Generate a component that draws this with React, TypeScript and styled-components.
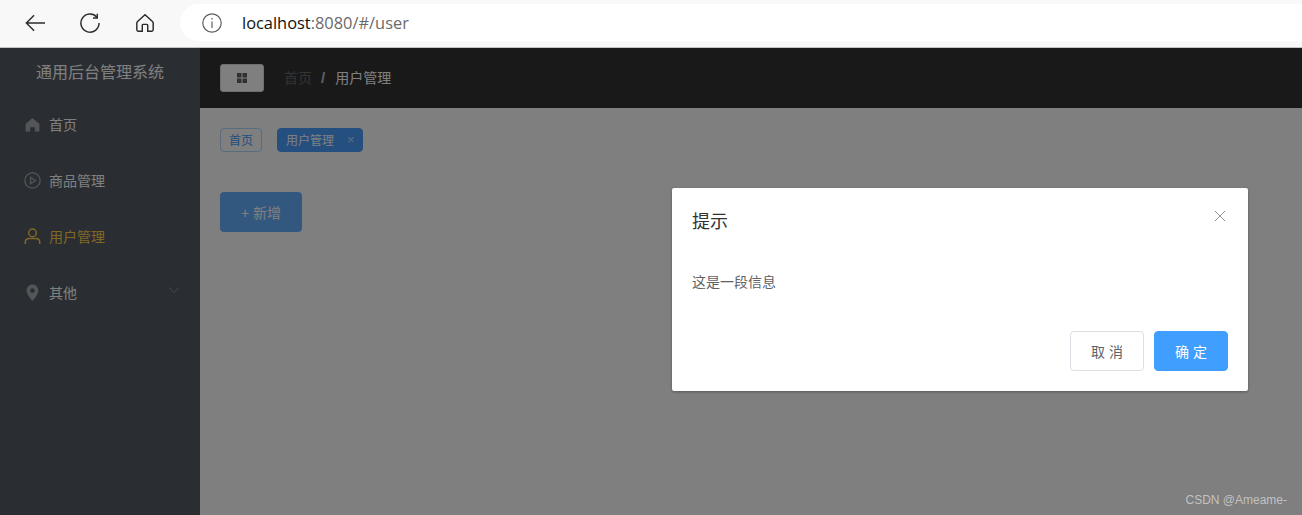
import React from 'react'
import styled, { createGlobalStyle } from 'styled-components'

const GlobalStyle = createGlobalStyle`
  html, body {
    margin: 0;
    padding: 0;
    height: 100%;
    overflow: hidden;
    font-family: "Liberation Sans", "Noto Sans CJK SC", sans-serif;
  }
  * {
    box-sizing: border-box;
  }
`

const Screen = styled.div`
  position: relative;
  width: 1302px;
  height: 515px;
  display: flex;
  flex-direction: column;
  overflow: hidden;
`

const BrowserBar = styled.div`
  flex: none;
  height: 48px;
  display: flex;
  align-items: center;
  padding: 1px 0 3px 25px;
  background: #f8f8f8;
  border-bottom: 1px solid #c4c4c4;
`

const NavGroup = styled.div`
  flex: none;
  display: flex;
  gap: 35px;
`

const NavIcon = styled.svg`
  display: block;
  width: 20px;
  height: 20px;
  fill: none;
  stroke: #2b2b2b;
  stroke-width: 1.6;
`

const AddressPill = styled.div`
  flex: 1;
  height: 37px;
  margin-left: 25px;
  margin-right: -40px;
  display: flex;
  align-items: center;
  gap: 20px;
  padding-left: 22px;
  background: #fff;
  border-radius: 19px;
  font-family: "Open Sans", sans-serif;
  font-size: 16.4px;
`

const UrlHost = styled.span`
  color: #111;
`

const UrlRest = styled.span`
  color: #6a6a6a;
`

const AppArea = styled.div`
  position: relative;
  flex: 1;
  display: flex;
  min-height: 0;
`

const Sidebar = styled.aside`
  flex: none;
  width: 200px;
  background: #545c64;
  color: #fff;
`

const SideTitle = styled.h3`
  margin: 0;
  height: 49px;
  line-height: 49px;
  text-align: center;
  font-size: 16px;
  font-weight: 400;
  color: #fff;
`

const MenuItem = styled.div<{ $active?: boolean }>`
  position: relative;
  height: 56px;
  display: flex;
  align-items: center;
  gap: 8px;
  padding: 0 0 2px 24px;
  font-size: 14px;
  color: ${({ $active }) => ($active ? '#ffd04b' : '#fff')};
`

const MenuIcon = styled.svg<{ $muted?: boolean }>`
  flex: none;
  width: 17px;
  height: 17px;
  color: ${({ $muted }) => ($muted ? '#a6abb0' : '#ffd04b')};
`

const Chevron = styled.svg`
  position: absolute;
  right: 20px;
  top: 21px;
  width: 12px;
  height: 8px;
  fill: none;
  stroke: #8f959b;
  stroke-width: 1;
`

const Content = styled.div`
  flex: 1;
  min-width: 0;
  display: flex;
  flex-direction: column;
  background: #fff;
`

const Header = styled.header`
  flex: none;
  height: 60px;
  display: flex;
  align-items: center;
  gap: 20px;
  padding-left: 20px;
  background: #333;
`

const MenuButton = styled.div`
  width: 44px;
  height: 28px;
  display: flex;
  align-items: center;
  justify-content: center;
  background: #fff;
  border: 1px solid #dcdfe6;
  border-radius: 3px;
`

const Breadcrumb = styled.div`
  display: flex;
  align-items: center;
  padding-bottom: 2px;
  font-size: 14px;
  color: #fff;
`

const CrumbHome = styled.span`
  color: #666;
`

const CrumbSep = styled.span`
  margin: 0 10px 0 9px;
  font-size: 15px;
  color: #c0c4cc;
  font-weight: 700;
`

const Main = styled.main`
  flex: 1;
  padding: 20px;
`

const TagRow = styled.div`
  display: flex;
  gap: 15px;
`

const Tag = styled.div<{ $selected?: boolean }>`
  height: 24px;
  display: flex;
  align-items: center;
  padding: 0 8px 1px;
  font-size: 12px;
  border-radius: 4px;
  border: 1px solid ${({ $selected }) => ($selected ? '#4a9fff' : '#b3d8ff')};
  background: ${({ $selected }) => ($selected ? '#4a9fff' : '#fff')};
  color: ${({ $selected }) => ($selected ? '#fff' : '#409eff')};
`

const TagClose = styled.span`
  margin-left: 13px;
  margin-right: -1px;
  font-size: 13px;
  line-height: 1;
  color: #fff;
  opacity: 0.6;
`

const AddButton = styled.div`
  width: 82px;
  height: 40px;
  margin-top: 40px;
  display: flex;
  align-items: center;
  justify-content: center;
  font-size: 14px;
  color: #fff;
  background: #66b1ff;
  border-radius: 4px;
`

const Mask = styled.div`
  position: absolute;
  inset: 0;
  background: rgba(0, 0, 0, 0.5);
`

const Dialog = styled.div`
  position: absolute;
  left: 672px;
  top: 140px;
  width: 576px;
  height: 203px;
  display: flex;
  flex-direction: column;
  background: #fff;
  border-radius: 2px;
  box-shadow: 0 1px 3px rgba(0, 0, 0, 0.3);
`

const DialogHeader = styled.div`
  position: relative;
  padding: 22px 20px 8px;
  font-size: 18px;
  line-height: 24px;
  color: #303133;
`

const DialogClose = styled.svg`
  position: absolute;
  top: 22px;
  right: 22px;
  width: 12px;
  height: 12px;
  stroke: #909399;
  stroke-width: 1;
`

const DialogBody = styled.div`
  flex: 1;
  padding: 31px 20px;
  font-size: 14px;
  line-height: 19px;
  color: #606266;
`

const DialogFooter = styled.div`
  display: flex;
  justify-content: flex-end;
  gap: 10px;
  padding: 0 20px 20px;
`

const FooterButton = styled.div<{ $primary?: boolean }>`
  width: 74px;
  height: 40px;
  display: flex;
  align-items: center;
  justify-content: center;
  padding-left: 4px;
  font-size: 14px;
  letter-spacing: 4px;
  border-radius: 4px;
  border: 1px solid ${({ $primary }) => ($primary ? '#409eff' : '#dcdfe6')};
  background: ${({ $primary }) => ($primary ? '#409eff' : '#fff')};
  color: ${({ $primary }) => ($primary ? '#fff' : '#606266')};
`

const Watermark = styled.div`
  position: absolute;
  right: 15px;
  bottom: 8px;
  font-size: 12px;
  color: #c4c4c4;
  text-shadow: 0 0 1px #777;
`

const HomeGlyph = () => (
  <MenuIcon $muted viewBox="0 0 16 16" fill="currentColor">
    <path d="M8 1.800 1.500 7.500V14.500h4.300v-4h4.400v4h4.300V7.500z" />
  </MenuIcon>
)

const PlayGlyph = () => (
  <MenuIcon $muted viewBox="0 0 16 16" fill="none" stroke="currentColor" strokeWidth="1.200">
    <circle cx="8" cy="8" r="7.200" />
    <path d="M6.200 5v6L10.800 8z" />
  </MenuIcon>
)

const UserGlyph = () => (
  <MenuIcon viewBox="0 0 16 16" fill="none" stroke="currentColor" strokeWidth="1.400">
    <circle cx="8" cy="4.600" r="3.600" />
    <path d="M1.200 15v-1.600c0-2.100 1.600-3.600 3.600-3.600h6.400c2 0 3.600 1.500 3.600 3.600V15" />
  </MenuIcon>
)

const PinGlyph = () => (
  <MenuIcon $muted viewBox="0 0 16 16" fill="currentColor">
    <path
      fillRule="evenodd"
      d="M8 .5C4.800.5 2.500 3 2.500 6.200 2.500 9.600 6 13.800 8 16c2-2.200 5.500-6.400 5.500-9.800C13.500 3 11.200.5 8 .5zm0 3.500a2.200 2.200 0 1 1 0 4.400 2.200 2.200 0 0 1 0-4.400z"
    />
  </MenuIcon>
)

const App: React.FC = () => (
  <Screen>
    <GlobalStyle />
    <BrowserBar>
      <NavGroup>
        <NavIcon viewBox="0 0 22 22">
          <path d="M22 11H1.500M10 2.500 1.500 11l8.500 8.500" />
        </NavIcon>
        <NavIcon viewBox="0 0 22 22">
          <path d="M18.600 4.600A10 10 0 1 0 21 11" />
          <path d="M19 .8v4.700h-4.700" />
        </NavIcon>
        <NavIcon viewBox="0 0 22 22">
          <path d="M11 2 2.800 9.300c-.5.500-.8 1-.8 1.700v7.500c0 .9.600 1.500 1.500 1.500H8v-6.500c0-.6.400-1 1-1h4c.6 0 1 .4 1 1V20h4.500c.9 0 1.500-.6 1.500-1.500V11c0-.7-.3-1.200-.8-1.700z" />
        </NavIcon>
      </NavGroup>
      <AddressPill>
        <svg width="20" height="20" viewBox="0 0 20 20" fill="none" stroke="#5f5f5f" strokeWidth="1.200">
          <circle cx="10" cy="10" r="9.200" />
          <path d="M10 8.500v6.500M10 5v1.500" />
        </svg>
        <div>
          <UrlHost>localhost</UrlHost>
          <UrlRest>:8080/#/user</UrlRest>
        </div>
      </AddressPill>
    </BrowserBar>
    <AppArea>
      <Sidebar>
        <SideTitle>通用后台管理系统</SideTitle>
        <MenuItem>
          <HomeGlyph />
          首页
        </MenuItem>
        <MenuItem>
          <PlayGlyph />
          商品管理
        </MenuItem>
        <MenuItem $active>
          <UserGlyph />
          用户管理
        </MenuItem>
        <MenuItem>
          <PinGlyph />
          其他
          <Chevron viewBox="0 0 12 8">
            <path d="M1 1.500 6 6.500l5-5" />
          </Chevron>
        </MenuItem>
      </Sidebar>
      <Content>
        <Header>
          <MenuButton>
            <svg width="10" height="10" viewBox="0 0 10 10" fill="#606266">
              <rect x="0" y="0" width="4.500" height="4.500" />
              <rect x="5.500" y="0" width="4.500" height="4.500" />
              <rect x="0" y="5.500" width="4.500" height="4.500" />
              <rect x="5.500" y="5.500" width="4.500" height="4.500" />
            </svg>
          </MenuButton>
          <Breadcrumb>
            <CrumbHome>首页</CrumbHome>
            <CrumbSep>/</CrumbSep>
            用户管理
          </Breadcrumb>
        </Header>
        <Main>
          <TagRow>
            <Tag>首页</Tag>
            <Tag $selected>
              用户管理
              <TagClose>×</TagClose>
            </Tag>
          </TagRow>
          <AddButton>+ 新增</AddButton>
        </Main>
      </Content>
      <Mask />
      <Dialog>
        <DialogHeader>
          提示
          <DialogClose viewBox="0 0 12 12">
            <path d="M1 1l10 10M11 1 1 11" />
          </DialogClose>
        </DialogHeader>
        <DialogBody>这是一段信息</DialogBody>
        <DialogFooter>
          <FooterButton>取消</FooterButton>
          <FooterButton $primary>确定</FooterButton>
        </DialogFooter>
      </Dialog>
      <Watermark>CSDN @Ameame-</Watermark>
    </AppArea>
  </Screen>
)

export default App
